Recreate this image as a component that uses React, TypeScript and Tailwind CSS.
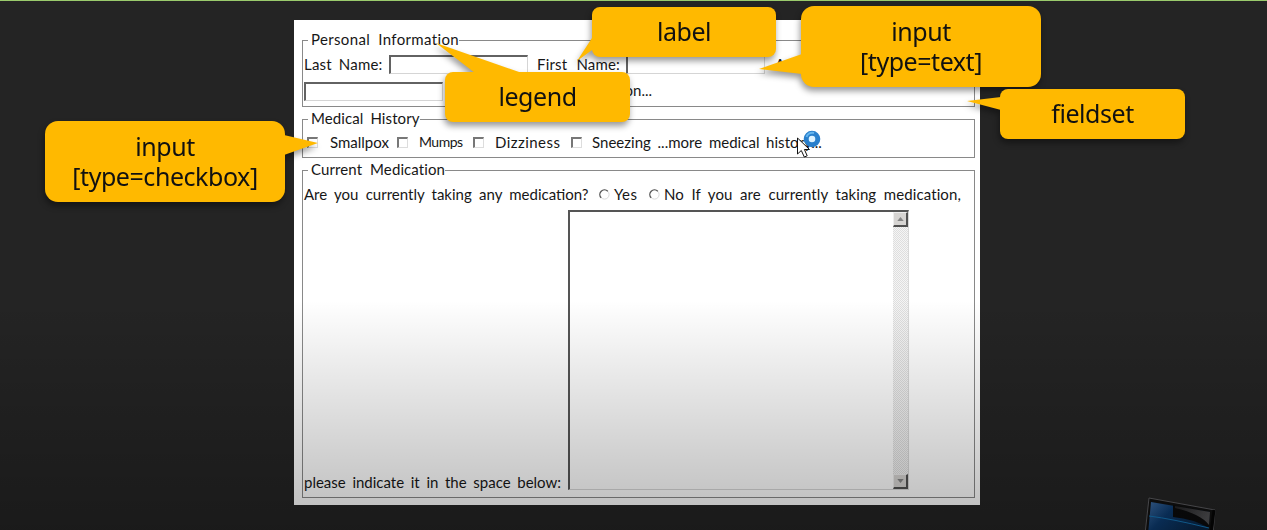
import React from "react";

type TextProps = { className: string; children: React.ReactNode };

function Txt({ className, children }: TextProps) {
  return <span className={`block shrink-0 whitespace-pre pb-[2px] ${className}`}>{children}</span>;
}

function Group({ title, className, legendClass, children }: { title: string; className: string; legendClass: string; children: React.ReactNode }) {
  return (
    <fieldset className={`w-[673px] min-w-0 border border-[#898989] ${className}`}>
      <legend className={`ml-[5px] h-5 whitespace-pre pl-[3px] leading-[18px] ${legendClass}`}>{title}</legend>
      {children}
    </fieldset>
  );
}

function Field({ className }: { className: string }) {
  return <div className={`h-[19px] w-[139px] shrink-0 border-l-2 border-t-2 border-r border-b border-l-[#626262] border-t-[#626262] border-r-[#d5d5d5] border-b-[#d5d5d5] bg-white ${className}`} />;
}

function Check() {
  return <div className="mb-px size-[11px] shrink-0 border-b border-l-2 border-r border-t-2 border-b-[#ddd] border-l-[#777] border-r-[#ddd] border-t-[#777] bg-white" />;
}

function Radio() {
  return (
    <svg viewBox="0 0 11 11" className="mb-[2px] size-[11px] shrink-0" fill="none">
      <circle cx="5.5" cy="5.5" r="4.6" stroke="#d9d9d9" />
      <path d="M2.2 8.8A4.6 4.6 0 0 1 8.8 2.2" stroke="#555" strokeWidth="1.3" />
    </svg>
  );
}

function ScrollButton({ down }: { down?: boolean }) {
  return (
    <div className="flex h-[15px] w-[15px] items-center justify-center border-b-2 border-r-2 border-b-[#505050] border-r-[#505050] border-l border-t border-l-[#eee] border-t-[#eee] bg-[#d6d4d2]">
      <svg viewBox="0 0 8 5" className="h-1 w-[7px]">
        <path d={down ? "M0 0H8L4 5Z" : "M0 5H8L4 0Z"} fill="#858585" />
      </svg>
    </div>
  );
}

function Callout({ className, tail, children }: { className: string; tail: string; children: React.ReactNode }) {
  return (
    <div className={`absolute flex flex-col items-center justify-center bg-[#ffb900] pb-[2px] text-center text-[25px] leading-[30px] tracking-[-0.45px] text-[#111] drop-shadow-[-1px_4px_3px_rgba(0,0,0,0.4)] ${className}`}>
      <svg className="absolute left-0 top-0 overflow-visible" width="1" height="1">
        <path d={tail} fill="#ffb900" />
      </svg>
      {children}
    </div>
  );
}

export default function App() {
  return (
    <main className="relative h-[530px] w-[1267px] overflow-hidden border-t border-[#9aca6c] bg-[#242424] pl-[294px] pt-[19px] font-['Noto_Sans','Open_Sans',sans-serif]">
      <form className="h-[485px] w-[686px] bg-white pl-2 pt-[10px] font-['Lato',sans-serif] text-[15px] leading-5 text-[#171717]">
        <Group title="Personal Information" className="h-[77px]" legendClass="w-[151px] tracking-[0.35px] [word-spacing:4px]">
          <div className="flex h-[29px] items-center pl-px">
            <Txt className="w-[85px] tracking-[0.2px] [word-spacing:3px]">Last Name:</Txt>
            <Field className="" />
            <Txt className="w-[98px] pl-[9px] tracking-[0.2px] [word-spacing:5px]">First Name:</Txt>
            <Field className="" />
            <Txt className="pl-[10px]">Address:</Txt>
          </div>
          <div className="flex h-[24px] items-center">
            <Field className="ml-px" />
            <Txt className="w-[209px] text-right">...more personal information...</Txt>
          </div>
        </Group>
        <Group title="Medical History" className="mt-[2px] h-[49px]" legendClass="w-[112px] tracking-[0.1px] [word-spacing:3px]">
          <div className="flex h-7 items-center pl-1">
            <Check />
            <Txt className="w-[79px] pl-[12px]">Smallpox</Txt>
            <Check />
            <Txt className="w-[65px] pl-[11px] text-[14px] tracking-[-0.5px]">Mumps</Txt>
            <Check />
            <Txt className="w-[87px] pl-[11px] tracking-[0.45px]">Dizziness</Txt>
            <Check />
            <Txt className="pl-[10px] tracking-[0.02px] [word-spacing:2.8px]">Sneezing ...more medical history...</Txt>
          </div>
        </Group>
        <Group title="Current Medication" className="mt-[2px] h-[338px]" legendClass="w-[137px] tracking-[0.1px] [word-spacing:4px]">
          <div className="flex h-[30px] items-center pl-px">
            <Txt className="w-[295px] [word-spacing:3.4px]">Are you currently taking any medication?</Txt>
            <Radio />
            <Txt className="w-[39px] pl-1 tracking-[0.4px]">Yes</Txt>
            <Radio />
            <Txt className="pl-[4px] tracking-[0.1px] [word-spacing:3.6px]">No If you are currently taking medication,</Txt>
          </div>
          <div className="flex h-[280px] items-end pl-px">
            <Txt className="mb-[-4px] w-[264px] [word-spacing:2.8px]">please indicate it in the space below:</Txt>
            <div className="flex h-[280px] w-[341px] justify-end border-l-2 border-t-2 border-r border-b border-l-[#555] border-t-[#555] border-r-[#d8d8d8] border-b-[#d8d8d8]">
              <div className="flex w-[15px] flex-col justify-between bg-[repeating-conic-gradient(#dedede_0_25%,#f5f5f5_0_50%)] bg-[length:2px_2px]">
                <ScrollButton />
                <ScrollButton down />
              </div>
            </div>
          </div>
        </Group>
      </form>

      <svg className="absolute left-[1141px] top-[493px]" width="80" height="40" viewBox="0 0 80 40">
        <defs>
          <linearGradient id="screen" x1="0" y1="0" x2="1" y2="0.5">
            <stop offset="0" stopColor="#3d6da5" />
            <stop offset="0.4" stopColor="#0c3b70" />
            <stop offset="1" stopColor="#082342" />
          </linearGradient>
          <linearGradient id="glare" x1="0" y1="0" x2="1" y2="0.4">
            <stop offset="0" stopColor="#222224" />
            <stop offset="1" stopColor="#505053" />
          </linearGradient>
        </defs>
        <path d="M8 4L74 16L72 40H4Z" fill="#111" stroke="#5c5c60" />
        <path d="M10 8L69 18L67 40H7Z" fill="url(#screen)" />
        <path d="M32 11L69 18L68 34Q53 25 32 23Z" fill="#0b0b0c" />
        <path d="M34 12L69 18L68 31Q60 20 34 14Z" fill="url(#glare)" />
        <path d="M8 22Q32 25 68 34" stroke="#1677b8" fill="none" />
        <path d="M73 16L70 40" stroke="#050505" strokeWidth="3" />
      </svg>

      <div className="pointer-events-none absolute inset-x-0 bottom-0 h-[230px] bg-gradient-to-b from-black/0 to-black/27" />

      <svg className="absolute left-[796px] top-[128px]" width="28" height="31" viewBox="0 0 28 31">
        <circle cx="16" cy="10" r="5.8" fill="#dcf2ff" stroke="#287fcc" strokeWidth="5" />
        <path d="M10.5 8A6 6 0 0 1 18 4" stroke="#64b5ee" strokeWidth="2" fill="none" />
        <path d="M1.5 9V25L5.3 21.5L8.3 28L11.2 26.8L8.4 20.5H13.5Z" fill="white" stroke="#111" />
      </svg>

      <Callout className="left-[592px] top-[6px] h-[50px] w-[184px] rounded-[8px]" tail="M0 31L-15 54L0 43L12 50L12 20Z">
        <span>label</span>
      </Callout>
      <Callout className="left-[801px] top-[5px] h-[81px] w-[240px] rounded-[13px]" tail="M1 48L-42 63L1 68Z">
        <span>input</span><span>[type=text]</span>
      </Callout>
      <Callout className="left-[445px] top-[71px] h-[50px] w-[185px] rounded-[8px]" tail="M30 1L-9 -29L77 1Z">
        <span>legend</span>
      </Callout>
      <Callout className="left-[1000px] top-[88px] h-[50px] w-[185px] rounded-[8px]" tail="M1 8L-33 12L1 21Z">
        <span>fieldset</span>
      </Callout>
      <Callout className="left-[45px] top-[120px] h-[81px] w-[240px] rounded-[13px]" tail="M239 14L273 22L239 34Z">
        <span>input</span><span>[type=checkbox]</span>
      </Callout>
    </main>
  );
}
